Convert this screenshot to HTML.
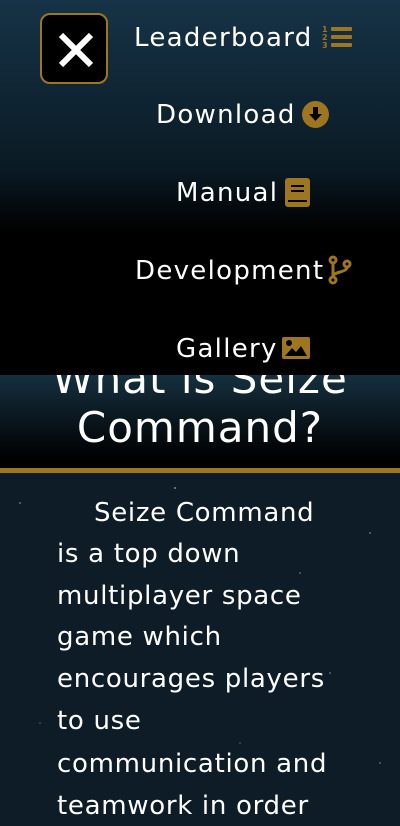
<!DOCTYPE html>
<html><head><meta charset="utf-8"><style>
*{margin:0;padding:0;box-sizing:border-box}
body{width:400px;height:826px;overflow:hidden;position:relative;background:#0e1c27;font-family:"DejaVu Sans","Liberation Sans",sans-serif;color:#fff}
.stars{position:absolute;left:0;top:473px;width:400px;height:353px;background:
radial-gradient(1px 1px at 20px 30px,#8aa 50%,transparent),radial-gradient(1px 1px at 175px 15px,#ccd 50%,transparent),
radial-gradient(1px 1px at 300px 100px,#889 50%,transparent),radial-gradient(1px 1px at 370px 60px,#99a 50%,transparent),
radial-gradient(1px 1px at 330px 200px,#889 50%,transparent),radial-gradient(1px 1px at 40px 250px,#667 50%,transparent),
radial-gradient(1px 1px at 380px 290px,#889 50%,transparent),radial-gradient(1px 1px at 240px 270px,#667 50%,transparent),#0e1c27}
.hdr{position:absolute;left:0;top:375px;width:400px;height:93px;background:linear-gradient(#15303f,#000 90%)}
.bar{position:absolute;left:0;top:468px;width:400px;height:5px;background:#9e7620}
.h1{position:absolute;left:0;width:400px;text-align:center;font-size:42px;line-height:48px;letter-spacing:1px}
.menu{position:absolute;left:0;top:0;width:400px;height:375px;background:linear-gradient(#163347 0%,#0a1a24 45%,#000 62%)}
.close{position:absolute;left:40px;top:13px;width:68px;height:71px;border:2px solid #9e7620;border-radius:10px;background:#000}
.it{position:absolute;font-size:26px;line-height:30px;white-space:nowrap;letter-spacing:1.3px}
.ln{position:absolute;left:57px;font-size:26px;line-height:30px;white-space:nowrap;letter-spacing:0.7px}
</style></head><body>
<div class="stars"></div>
<div class="hdr"></div>
<div class="h1" style="top:404px">Command?</div>
<div class="bar"></div>
<div class="ln" style="left:94px;top:498px">Seize Command</div>
<div class="ln" style="top:539px">is a top down</div>
<div class="ln" style="top:581px">multiplayer space</div>
<div class="ln" style="top:622px">game which</div>
<div class="ln" style="top:664px">encourages players</div>
<div class="ln" style="top:706px">to use</div>
<div class="ln" style="top:749px">communication and</div>
<div class="ln" style="top:791px">teamwork in order</div>
<div class="menu"></div>
<div style="position:absolute;left:0;top:375px;width:400px;height:30px;overflow:hidden"><div class="h1" style="top:-20px">What is Seize</div></div>
<div class="close"><svg width="68" height="71" viewBox="0 0 68 71"><path d="M19 20L49 50M49 20L19 50" stroke="#fff" stroke-width="6"/></svg></div>
<div class="it" style="left:134px;top:23px">Leaderboard</div>
<svg style="position:absolute;left:322px;top:25px" width="30" height="24" viewBox="0 0 30 24"><g fill="#9e7620"><rect x="9" y="2" width="21" height="4" rx="1"/><rect x="9" y="10" width="21" height="4" rx="1"/><rect x="9" y="18" width="21" height="4" rx="1"/><text x="0" y="7" font-size="8" font-family="DejaVu Sans" font-weight="bold">1</text><text x="0" y="15" font-size="8" font-family="DejaVu Sans" font-weight="bold">2</text><text x="0" y="23" font-size="8" font-family="DejaVu Sans" font-weight="bold">3</text></g></svg>
<div class="it" style="left:156px;top:100px">Download</div>
<svg style="position:absolute;left:302px;top:101px" width="27" height="27" viewBox="0 0 27 27"><circle cx="13.5" cy="13.5" r="13.5" fill="#9e7620"/><path d="M11 6h5v7h4l-6.5 7-6.5-7h4z" fill="#000"/></svg>
<div class="it" style="left:176px;top:178px">Manual</div>
<svg style="position:absolute;left:285px;top:178px" width="25" height="29" viewBox="0 0 25 29"><rect width="25" height="29" rx="3" fill="#9e7620"/><rect x="6" y="7" width="13" height="2" fill="#000"/><rect x="6" y="12" width="13" height="2" fill="#000"/><rect x="3" y="22" width="19" height="2" fill="#000"/></svg>
<div class="it" style="left:135px;top:256px">Development</div>
<svg style="position:absolute;left:328px;top:255px" width="24" height="30" viewBox="0 0 24 30"><g fill="none" stroke="#9e7620" stroke-width="3"><circle cx="5" cy="5" r="3"/><circle cx="19" cy="9" r="3"/><circle cx="5" cy="25" r="3"/><path d="M5 8v14M19 12c0 6-14 4-14 10"/></g></svg>
<div class="it" style="left:176px;top:334px">Gallery</div>
<svg style="position:absolute;left:282px;top:337px" width="28" height="22" viewBox="0 0 28 22"><rect width="28" height="22" rx="2" fill="#9e7620"/><path d="M3 19l7-8 4 4 5-6 6 10z" fill="#000"/><circle cx="7" cy="6" r="3" fill="#000"/></svg>
</body></html>
